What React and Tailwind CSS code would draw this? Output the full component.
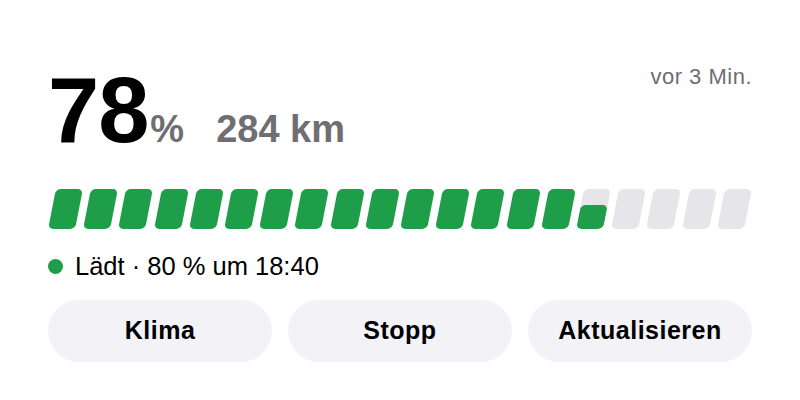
const SEGMENTS = 20;
const LEVEL = 78;

function Segment({ fill }) {
  if (fill >= 1) {
    return <div className="flex-1 h-full rounded-[5px] bg-[#1f9e4a] -skew-x-11" />;
  }
  if (fill <= 0) {
    return <div className="flex-1 h-full rounded-[5px] bg-[#e5e5ea] -skew-x-11" />;
  }
  return (
    <div className="flex-1 h-full rounded-[5px] bg-[#e5e5ea] -skew-x-11 flex flex-col justify-end overflow-hidden">
      <div className="w-full rounded-[5px] bg-[#1f9e4a]" style={{ height: `${fill * 100}%` }} />
    </div>
  );
}

export default function App() {
  const filled = (LEVEL / 100) * SEGMENTS;
  const segs = Array.from({ length: SEGMENTS }, (_, i) => Math.max(0, Math.min(1, filled - i)));

  return (
    <div className="w-[800px] h-[400px] bg-white px-12 pt-[64px] font-['Liberation_Sans',Arial,sans-serif]">
      {/* header */}
      <div className="flex items-start justify-between">
        <div className="flex items-baseline">
          <span className="text-[92px] font-bold leading-none text-black tracking-[-1px]">78</span>
          <span className="text-[38px] font-bold leading-none text-[#6e6e73] ml-0.5">%</span>
          <span className="text-[38px] font-bold leading-none text-[#6e6e73] ml-8">284 km</span>
        </div>
        <span className="-mt-1 text-[22px] tracking-[0.5px] text-[#6e6e73]">vor 3 Min.</span>
      </div>

      {/* charge bar */}
      <div className="mt-[33px] h-10 px-1 flex gap-2">
        {segs.map((f, i) => (
          <Segment key={i} fill={f} />
        ))}
      </div>

      {/* status */}
      <div className="mt-[22px] flex items-center gap-3 text-[25.5px] leading-[30px] text-black">
        <span className="w-[15px] h-[15px] rounded-full bg-[#1f9e4a]" />
        <span>Lädt · 80 % um 18:40</span>
      </div>

      {/* actions */}
      <div className="mt-[19px] grid grid-cols-3 gap-4">
        {['Klima', 'Stopp', 'Aktualisieren'].map((label) => (
          <button
            key={label}
            className="h-[62px] rounded-full bg-[#f2f2f7] text-[25px] tracking-[0.5px] font-bold text-black"
          >
            {label}
          </button>
        ))}
      </div>
    </div>
  );
}
